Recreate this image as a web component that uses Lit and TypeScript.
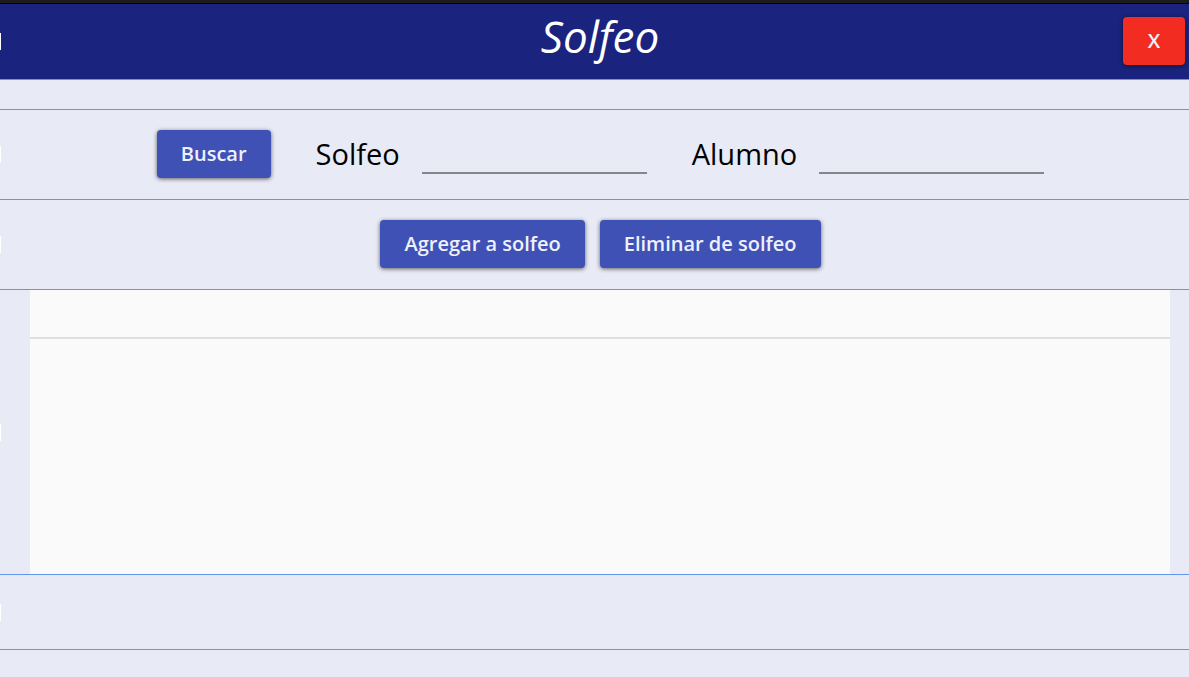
import { LitElement, html, css } from "lit";
import { customElement } from "lit/decorators.js";

@customElement("app-root")
export class AppRoot extends LitElement {
  static styles = css`
    * {
      box-sizing: border-box;
    }
    :host {
      display: flex;
      flex-direction: column;
      min-height: 100vh;
      background: #e8eaf6;
      color: #000;
      font-family: "Open Sans", "Noto Sans", sans-serif;
    }
    .frame {
      height: 4px;
      background: #1c1c1c;
      border-bottom: 1px solid #000;
    }
    .row {
      display: flex;
      align-items: center;
      border-bottom: 1px solid #6495ed;
    }
    .marker {
      flex: none;
      width: 1px;
      height: 17px;
      background: #fff;
    }
    .content {
      flex: 1;
      display: flex;
      justify-content: center;
      align-items: center;
      padding: 0 18px 2px 29px;
    }
    .header {
      height: 76px;
      background: #1a237e;
    }
    .header .content {
      display: grid;
      grid-template-columns: 1fr auto 1fr;
      padding: 0 4px 2px 14px;
    }
    .spacer {
      height: 30px;
    }
    .tools {
      height: 90px;
    }
    .actions {
      gap: 15px;
    }
    .search {
      gap: 45px;
    }
    .list {
      flex: 1;
      align-items: stretch;
    }
    .list .marker {
      align-self: center;
    }
    .list .content {
      align-items: stretch;
      padding: 0 19px 0 29px;
    }
    .footer {
      height: 75px;
    }
    .rest {
      height: 27px;
    }
    h1 {
      grid-column: 2;
      margin: 0;
      padding-bottom: 10px;
      color: #fff;
      font-size: 44px;
      line-height: 56px;
      font-weight: 400;
      font-style: italic;
    }
    button {
      min-width: 62px;
      height: 48px;
      padding: 0 24px;
      border: 0;
      border-radius: 4px;
      background: #3f51b5;
      color: #eef0fb;
      font: 600 20px/28px "Open Sans", "Noto Sans", sans-serif;
      box-shadow: 0 1px 4px rgba(0, 0, 0, 0.6);
    }
    .close {
      justify-self: end;
      background: #f32c22;
    }
    .field {
      display: flex;
      align-items: center;
      gap: 22px;
    }
    label {
      font-size: 29px;
      line-height: 40px;
    }
    input {
      width: 225px;
      height: 40px;
      padding: 0;
      border: 0;
      border-bottom: 2px solid #85868c;
      background: transparent;
      outline: 0;
      font: 29px/36px "Open Sans", "Noto Sans", sans-serif;
    }
    table {
      width: 100%;
      border-collapse: collapse;
      background: #fafafa;
    }
    thead th {
      height: 48px;
      padding: 0;
      border-bottom: 2px solid #dfdfdf;
    }
  `;

  render() {
    return html`
      <div class="frame"></div>
      <header class="row header">
        <span class="marker"></span>
        <div class="content">
          <h1>Solfeo</h1>
          <button class="close" type="button">X</button>
        </div>
      </header>
      <div class="row spacer"></div>
      <form class="row tools" @submit=${(e: Event) => e.preventDefault()}>
        <span class="marker"></span>
        <div class="content search">
          <button type="submit">Buscar</button>
          <div class="field">
            <label for="solfeo">Solfeo</label>
            <input id="solfeo" type="text" />
          </div>
          <div class="field">
            <label for="alumno">Alumno</label>
            <input id="alumno" type="text" />
          </div>
        </div>
      </form>
      <div class="row tools">
        <span class="marker"></span>
        <div class="content actions">
          <button type="button">Agregar a solfeo</button>
          <button type="button">Eliminar de solfeo</button>
        </div>
      </div>
      <main class="row list">
        <span class="marker"></span>
        <div class="content">
          <table>
            <thead>
              <tr><th scope="col"></th></tr>
            </thead>
            <tbody>
              <tr><td></td></tr>
            </tbody>
          </table>
        </div>
      </main>
      <footer class="row footer"><span class="marker"></span></footer>
      <div class="rest"></div>
    `;
  }
}
